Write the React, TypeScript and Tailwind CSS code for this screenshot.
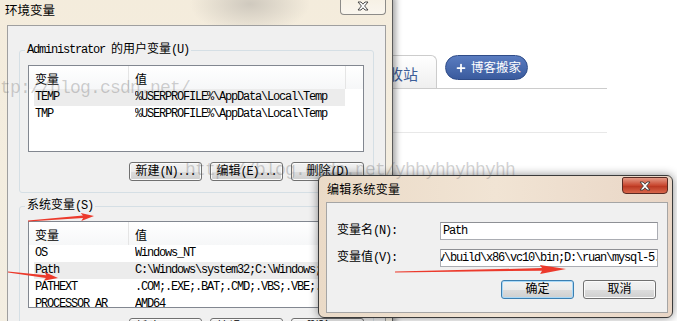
import clsx from "clsx";
import { Plus } from "lucide-react";

const mono =
  "font-['Liberation_Mono','Noto_Sans_CJK_SC',monospace] text-[12px] tracking-[-1.2px]";
const ui = "font-['Noto_Sans_CJK_SC','Noto_Sans',sans-serif]";

// CJK runs keep normal spacing, latin runs get squeezed to the 6px SimSun cell
const CJK = /([\u3000-\u9fff]+)/;

function Txt({ children }: { children: string }) {
  return (
    <>
      {children.split(CJK).map((part, i) =>
        i % 2 === 1 ? (
          <span key={i} className="tracking-normal">
            {part}
          </span>
        ) : (
          part
        )
      )}
    </>
  );
}

function WinButton({ label, primary }: { label: string; primary?: boolean }) {
  return (
    <div
      className={clsx(
        "flex h-[19px] w-[73px] shrink-0 items-center justify-center rounded-[3px] border leading-none whitespace-nowrap text-black",
        "bg-[linear-gradient(#f2f2f2_0%,#ebebeb_50%,#dddddd_51%,#cfcfcf_100%)]",
        primary
          ? "border-[#3c7fb1] shadow-[inset_0_0_0_1px_#a9d9f8]"
          : "border-[#707070] shadow-[inset_0_0_0_1px_#fbfbfb]",
        mono
      )}
    >
      <Txt>{label}</Txt>
    </div>
  );
}

function CloseGlyph({ className }: { className?: string }) {
  return (
    <svg width="12" height="10" viewBox="0 0 12 10" className={className}>
      <path
        d="M1 1h3l2 2.2L8 1h3L7.6 5 11 9H8L6 6.8 4 9H1l3.4-4z"
        fill="#ffffff"
        stroke="#3a3a3a"
        strokeWidth="0.9"
        strokeLinejoin="round"
      />
    </svg>
  );
}

type Row = [string, string];

function VarList({ rows, selected }: { rows: Row[]; selected: number }) {
  return (
    <div className="ml-[3px] h-[87px] w-[336px] overflow-hidden border border-[#828790] bg-white">
      <div
        className={clsx(
          "flex h-[23px] bg-[linear-gradient(#ffffff,#f6f7f8)] text-[12px] leading-none text-black",
          ui
        )}
      >
        <div className="flex h-full w-[100px] items-center border-r border-[#e5e5e5] pt-[2px] pl-[6px]">
          变量
        </div>
        <div className="flex h-full w-[217px] items-center border-r border-[#e5e5e5] pt-[2px] pl-[6px]">
          值
        </div>
      </div>
      <div className={clsx("pl-[5px] text-black", mono)}>
        {rows.map(([name, value], i) => (
          <div
            key={name}
            className={clsx(
              "flex h-[17px] w-[311px] items-center leading-[17px] whitespace-nowrap",
              i === selected && "bg-[#ececec]"
            )}
          >
            <div className="w-[101px] shrink-0 overflow-hidden pl-[1px]">{name}</div>
            <div className="min-w-0 flex-1 overflow-hidden">{value}</div>
          </div>
        ))}
      </div>
    </div>
  );
}

function Group({
  title,
  rows,
  selected,
  buttons,
  className,
}: {
  title: string;
  rows: Row[];
  selected: number;
  buttons: string[];
  className?: string;
}) {
  return (
    <fieldset
      className={clsx(
        "rounded-[3px] border border-[#d5dfe5] pl-[5px] pb-[11px]",
        className
      )}
    >
      <legend className={clsx("px-[2px] leading-[12px] text-black", mono)}>
        <Txt>{title}</Txt>
      </legend>
      <div className="mt-[9px]">
        <VarList rows={rows} selected={selected} />
      </div>
      <div className="mt-[10px] ml-[3px] flex w-[336px] justify-end gap-[8px]">
        {buttons.map((b) => (
          <WinButton key={b} label={b} />
        ))}
      </div>
    </fieldset>
  );
}

function arrow(x1: number, y1: number, x2: number, y2: number, head: number, hw: number) {
  const len = Math.hypot(x2 - x1, y2 - y1);
  const ux = (x2 - x1) / len;
  const uy = (y2 - y1) / len;
  const nx = -uy;
  const ny = ux;
  const bx = x2 - ux * head;
  const by = y2 - uy * head;
  const p = (x: number, y: number) => `${x.toFixed(1)},${y.toFixed(1)}`;
  return [
    p(x1 + nx * 0.4, y1 + ny * 0.4),
    p(bx + nx * 1.3, by + ny * 1.3),
    p(bx - ux * 2 + nx * hw, by - uy * 2 + ny * hw),
    p(x2, y2),
    p(bx - ux * 2 - nx * hw, by - uy * 2 - ny * hw),
    p(bx - nx * 1.3, by - ny * 1.3),
    p(x1 - nx * 0.4, y1 - ny * 0.4),
  ].join(" ");
}

const userRows: Row[] = [
  ["TEMP", "%USERPROFILE%\\AppData\\Local\\Temp"],
  ["TMP", "%USERPROFILE%\\AppData\\Local\\Temp"],
];

const sysRows: Row[] = [
  ["OS", "Windows_NT"],
  ["Path", "C:\\Windows\\system32;C:\\Windows;C:\\Windows\\System32\\Wbem"],
  ["PATHEXT", ".COM;.EXE;.BAT;.CMD;.VBS;.VBE;.JS;.JSE;.WSF"],
  ["PROCESSOR_AR", "AMD64"],
];

export default function App() {
  return (
    <div className="relative h-[321px] w-[677px] overflow-hidden bg-white">
      {/* blog page behind the dialogs */}
      <div className="pt-[55px] pl-[354px]">
        <div className="flex w-[253px] items-start border-b border-[#cccccc]">
          <div
            className={clsx(
              "flex h-[33px] items-center rounded-tr-[6px] border-t border-r border-l border-[#cccccc] bg-[linear-gradient(#ffffff,#efefef)] px-[18px] pt-[3px] text-[15px] leading-none text-[#3d5f98]",
              ui
            )}
          >
            回收站
          </div>
          <div
            className={clsx(
              "ml-[8px] flex h-[25px] w-[83px] items-center gap-[4px] rounded-full border border-[#2f4c88] bg-[linear-gradient(#5a7cc0,#3a5b9e)] pl-[9px] text-[12.5px] leading-none text-white",
              ui
            )}
          >
            <Plus size={12} strokeWidth={3.5} />
            博客搬家
          </div>
        </div>
        <div className="mt-[43px] h-px w-[253px] bg-[#e8e8e8]" />
      </div>

      {/* 环境变量 dialog */}
      <div className="absolute top-[-4px] left-0 h-[345px] w-[393px] border-r border-[#5b5b5b] bg-[radial-gradient(ellipse_60px_30px_at_250px_8px,#cfc9be,transparent),linear-gradient(#f4ecdc,#f3eee2)] shadow-[3px_0_6px_rgba(0,0,0,0.35)]">
        <div className="flex h-[29px] items-start">
          <div className={clsx("self-center pl-[5px] text-[12.5px] leading-none text-black", ui)}>
            环境变量
          </div>
          <div className="mr-[6px] ml-auto flex h-[19px] w-[46px] items-center justify-center rounded-b-[4px] border border-t-0 border-[#8c8b88] bg-[linear-gradient(rgba(255,255,255,0.2),rgba(255,255,255,0.5))] pt-[2px]">
            <CloseGlyph />
          </div>
        </div>
        <div className="mr-[6px] ml-[7px] h-[320px] border border-[#9f9f9f] bg-[#f0f0f0] px-[11px] pt-[18px]">
          <Group
            title="Administrator 的用户变量(U)"
            rows={userRows}
            selected={0}
            buttons={["新建(N)...", "编辑(E)...", "删除(D)"]}
          />
          <Group
            className="mt-[7px]"
            title="系统变量(S)"
            rows={sysRows}
            selected={1}
            buttons={["新建(W)...", "编辑(I)...", "删除(L)"]}
          />
        </div>
      </div>

      {/* 编辑系统变量 dialog */}
      <div className="absolute top-[175px] left-[318px] h-[143px] w-[355px] rounded-[6px] border border-[#3b3b3b] bg-[linear-gradient(90deg,#eadac7,#f1e4d4_50%,#e9d6c6)] shadow-[0_0_10px_rgba(0,0,0,0.45)]">
        <div className="flex h-[26px] items-start">
          <div className={clsx("self-center pl-[8px] text-[12px] tracking-[0.2px] leading-none text-black", ui)}>
            编辑系统变量
          </div>
          <div className="mt-px mr-[4px] ml-auto flex h-[17px] w-[46px] items-center justify-center rounded-b-[4px] rounded-t-[2px] border border-[#5a2a22] bg-[linear-gradient(#e59a86,#c8462e_50%,#b8341e_51%,#d8664a)]">
            <CloseGlyph />
          </div>
        </div>
        <div className="mr-[4px] ml-[7px] h-[111px] border border-[#a5a5a5] bg-[#f0f0f0] pt-[19px]">
          <div className="flex items-center">
            <div className={clsx("w-[113px] shrink-0 pl-[10px] leading-none text-black", mono)}>
              <Txt>变量名(N):</Txt>
            </div>
            <div
              className={clsx(
                "flex h-[18px] w-[218px] items-center border border-[#abadb3] border-t-[#8e9095] bg-white pl-[2px] leading-none text-black",
                mono
              )}
            >
              Path
            </div>
          </div>
          <div className="mt-[9px] flex items-center">
            <div className={clsx("w-[113px] shrink-0 pl-[10px] leading-none text-black", mono)}>
              <Txt>变量值(V):</Txt>
            </div>
            <div
              className={clsx(
                "flex h-[18px] w-[218px] items-center overflow-hidden border border-[#abadb3] border-t-[#8e9095] bg-white leading-none whitespace-nowrap text-black",
                mono
              )}
            >
              <span className="-ml-[3px]">{"v\\build\\x86\\vc10\\bin;D:\\ruan\\mysql-5.6\\bin"}</span>
            </div>
          </div>
          <div className="mt-[13px] flex justify-end gap-[9px] pr-[11px]">
            <WinButton label="确定" primary />
            <WinButton label="取消" />
          </div>
        </div>
      </div>

      {/* blog watermark */}
      <div className="pointer-events-none absolute top-[79px] left-0 font-['Liberation_Mono',monospace] text-[18px] leading-[18px] tracking-[-0.8px] whitespace-nowrap text-[rgba(90,90,90,0.28)]">
        tp://blog.csdn.net/
      </div>
      <div className="pointer-events-none absolute top-[161px] left-[185px] font-['Liberation_Mono',monospace] text-[18px] leading-[18px] tracking-[-0.8px] whitespace-nowrap text-[rgba(90,90,90,0.28)]">
        http://blog.csdn.net/yhhyhhyhhyhh
      </div>

      {/* red annotation arrows */}
      <svg className="pointer-events-none absolute top-0 left-0" width="677" height="321">
        <polygon points={arrow(28, 221, 94, 216, 11, 4)} fill="#ec3a2c" />
        <polygon points={arrow(8, 272, 58, 278, 12, 4.5)} fill="#ec3a2c" />
        <polygon points={arrow(395, 272, 566, 269, 24, 4.5)} fill="#ec3a2c" />
      </svg>
    </div>
  );
}
